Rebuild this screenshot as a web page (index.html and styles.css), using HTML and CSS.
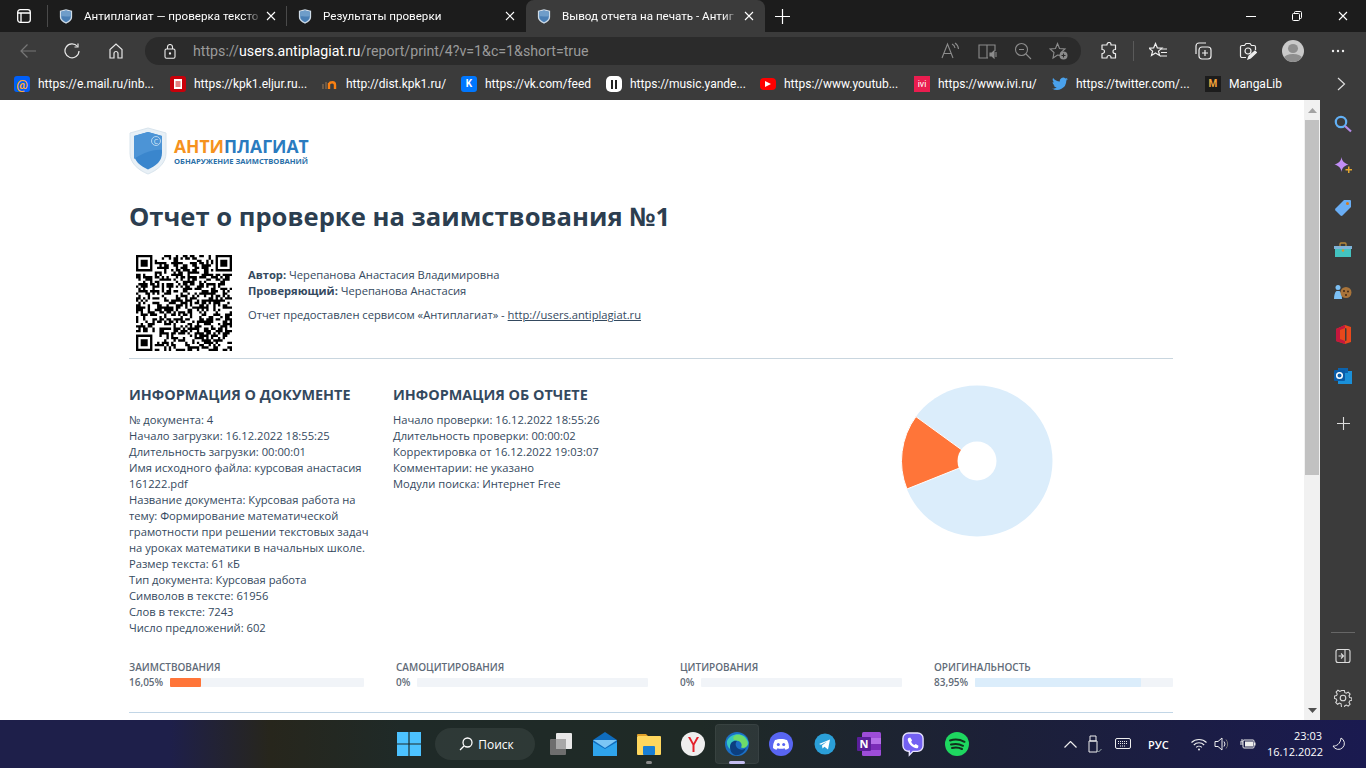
FILE: index.html
```html
<!DOCTYPE html>
<html lang="ru">
<head>
    <meta charset="UTF-8">
    <title>Вывод отчета на печать - Антиплагиат</title>
    <link rel="stylesheet" href="styles.css">
</head>
<body>

<svg class="defs" width="0" height="0">
    <symbol id="shield" viewBox="0 0 16 18">
        <path d="M1 2.500 8 .8l7 1.700v7.200c0 3.600-3.200 6-7 7.600-3.800-1.600-7-4-7-7.600z" fill="#cfdce8"/>
        <path d="M2.500 3.500 8 2.200l5.500 1.300v6.200c0 2.800-2.500 4.700-5.500 6-3-1.300-5.500-3.200-5.500-6z" fill="#4a7fb5"/>
        <path d="M8 2.200l5.500 1.300v5C10 10 6 8 2.500 9V3.500z" fill="#6f9dc9"/>
    </symbol>
    <symbol id="close" viewBox="0 0 10 10">
        <path d="M1 1l8 8M9 1 1 9" stroke="#fff" stroke-width="1.100" fill="none"/>
    </symbol>
</svg>

<div class="tabstrip">
    <div class="strip-icon">
        <svg width="16" height="16" viewBox="0 0 16 16" fill="none" stroke="#fff" stroke-width="1.300"><rect x="1.700" y="1.700" width="12.600" height="12.600" rx="2.500"/><path d="M1.700 5h12.600M5 5v9" /></svg>
    </div>
    <div class="tab">
        <svg class="tab-fav"><use href="#shield"/></svg>
        <span class="tab-title">Антиплагиат — проверка тексто</span>
        <svg class="tab-close"><use href="#close"/></svg>
    </div>
    <div class="tab">
        <svg class="tab-fav"><use href="#shield"/></svg>
        <span class="tab-title">Результаты проверки</span>
        <svg class="tab-close"><use href="#close"/></svg>
    </div>
    <div class="tab active">
        <svg class="tab-fav"><use href="#shield"/></svg>
        <span class="tab-title">Вывод отчета на печать - Антиг</span>
        <svg class="tab-close"><use href="#close"/></svg>
    </div>
    <div class="new-tab">
        <svg width="15" height="15" viewBox="0 0 15 15"><path d="M7.500 0v15M0 7.500h15" stroke="#fff" stroke-width="1.200"/></svg>
    </div>
    <div class="win-controls">
        <div class="win-btn"><svg width="10" height="10" viewBox="0 0 10 10"><path d="M0 5.500h10" stroke="#fff"/></svg></div>
        <div class="win-btn"><svg width="10" height="10" viewBox="0 0 10 10" fill="none" stroke="#fff"><rect x=".5" y="2.500" width="7" height="7" rx="1"/><path d="M2.500 2.500V1.500a1 1 0 0 1 1-1h5a1 1 0 0 1 1 1v5a1 1 0 0 1-1 1h-1"/></svg></div>
        <div class="win-btn"><svg width="10" height="10"><use href="#close"/></svg></div>
    </div>
</div>

<div class="toolbar">
    <div class="tool-btn"><svg width="16" height="16" viewBox="0 0 16 16" fill="none" stroke="#777" stroke-width="1.200"><path d="M16 8H1M7.500 1.500 1 8l6.500 6.500"/></svg></div>
    <div class="tool-btn"><svg width="16" height="16" viewBox="0 0 16 16" fill="none" stroke="#e8e8e8" stroke-width="1.200"><path d="M13.500 3.500A7 7 0 1 0 15 8"/><path d="M14 .5v3.500h-3.500"/></svg></div>
    <div class="tool-btn"><svg width="16" height="16" viewBox="0 0 16 16" fill="none" stroke="#e8e8e8" stroke-width="1.200"><path d="M2 15V6.500L8 1l6 5.500V15h-4v-4.500a2 2 0 0 0-4 0V15z"/></svg></div>
    <div class="address">
        <svg class="lock" width="12" height="15" viewBox="0 0 12 15" fill="none" stroke="#eee" stroke-width="1.100"><rect x="1" y="5" width="10" height="9.300" rx="1.500"/><path d="M3.500 5V3a2.500 2.500 0 0 1 5 0v2"/><circle cx="6" cy="9.500" r=".6" fill="#eee"/></svg>
        <span class="url"><span class="url-dim">https://</span>users.antiplagiat.ru<span class="url-dim">/report/print/4?v=1&amp;c=1&amp;short=true</span></span>
        <div class="addr-icons">
            <svg width="20" height="18" viewBox="0 0 20 18" fill="none" stroke="#8c8c8c" stroke-width="1.100"><path d="M1 16 6.500 2 12 16M3 11.500h7"/><path d="M11 2a5 5 0 0 1 3 4M14 1a8 8 0 0 1 3.500 6"/></svg>
            <svg width="20" height="18" viewBox="0 0 20 18" fill="none" stroke="#8c8c8c" stroke-width="1.100"><path d="M9 3H1v13h8zM9 3h8v6M9 16h1"/><path d="M12 11h2l2-2v7l-2-2h-2z" fill="#8c8c8c"/><path d="M18 10v5"/></svg>
            <svg width="18" height="18" viewBox="0 0 18 18" fill="none" stroke="#8c8c8c" stroke-width="1.100"><circle cx="7.500" cy="7.500" r="6"/><path d="M5 7.500h5M12 12l5 5"/></svg>
            <svg width="20" height="18" viewBox="0 0 20 18" fill="none" stroke="#8c8c8c" stroke-width="1.100"><path d="M8.500 1.500 10.500 6.500 16 7l-4 3.500 1 3-4.500-.5L4 16l1-5.500L1 7l5.500-.5z"/><circle cx="14.500" cy="13.500" r="4" fill="#8c8c8c" stroke="none"/><path d="M12.500 13.500h4M14.500 11.500v4" stroke="#2b2b2b"/></svg>
        </div>
    </div>
    <div class="tool-btn first"><svg width="18" height="18" viewBox="0 0 18 18" fill="none" stroke="#eee" stroke-width="1.200"><path d="M7 3V2.500a2 2 0 0 1 4 0V3h4.500v4.500H15a2 2 0 0 0 0 4h.5V16H11v-.5a2 2 0 0 0-4 0v.5H2v-4.500h.5a2 2 0 0 0 0-4H2V3z" stroke-linejoin="round"/></svg></div>
    <div class="tool-sep"></div>
    <div class="tool-btn wide"><svg width="18" height="18" viewBox="0 0 18 18" fill="none" stroke="#eee" stroke-width="1.200"><path d="M6.500 1.500 8.300 5.800l4.700.3-3.500 3 1.100 4.400-4.100-2.500-4 2.500L3.600 9.100 0 6.100l4.700-.3z"/><path d="M12 7h6M12 10.500h6M11 14h7"/></svg></div>
    <div class="tool-btn wide"><svg width="18" height="18" viewBox="0 0 18 18" fill="none" stroke="#eee" stroke-width="1.200"><path d="M2 12V4a3 3 0 0 1 3-3h7"/><rect x="5" y="5" width="12" height="12" rx="3"/><path d="M11 8v6M8 11h6"/></svg></div>
    <div class="tool-btn wide"><svg width="18" height="18" viewBox="0 0 18 18" fill="none" stroke="#eee" stroke-width="1.200"><path d="M7 15.500H3a1.500 1.500 0 0 1-1.500-1.500V5A1.500 1.500 0 0 1 3 3.500h2.500L7 1.500h4l1.500 2H15A1.500 1.500 0 0 1 16.500 5v3"/><circle cx="9" cy="9" r="3"/><path d="M9 17l1-3 6-5 1.500 1.500-6 5.500z" fill="#eee"/></svg></div>
    <div class="tool-btn wide"><span class="avatar"><span class="avatar-head"></span><span class="avatar-body"></span></span></div>
    <div class="tool-btn wide"><svg width="14" height="4" viewBox="0 0 14 4" fill="#eee"><circle cx="2" cy="2" r="1.200"/><circle cx="7" cy="2" r="1.200"/><circle cx="12" cy="2" r="1.200"/></svg></div>
</div>

<div class="bookmarks">
    <div class="bookmark"><span class="fav fav-mail">@</span><span>https://e.mail.ru/inb...</span></div>
    <div class="bookmark"><span class="fav fav-kpk"><svg width="8" height="10" viewBox="0 0 8 10"><path d="M0 0h8v10H0z" fill="#fff"/><path d="M1.500 3h5M1.500 5h5M1.500 7h5" stroke="#c00" /></svg></span><span>https://kpk1.eljur.ru...</span></div>
    <div class="bookmark"><span class="fav fav-dist"><svg width="16" height="12" viewBox="0 0 16 12" fill="none"><path d="M1 11V6M4 11V4" stroke="#6b5a48" stroke-width="2"/><path d="M7 11V5M7 6c1-2 6-3 6 1v4" stroke="#f98012" stroke-width="2.400"/></svg></span><span>http://dist.kpk1.ru/</span></div>
    <div class="bookmark"><span class="fav fav-vk">K</span><span>https://vk.com/feed</span></div>
    <div class="bookmark"><span class="fav fav-music"><svg width="8" height="9" viewBox="0 0 8 9"><path d="M1 0h2v9H1zM5 0h2v9H5z" fill="#222"/></svg></span><span>https://music.yande...</span></div>
    <div class="bookmark"><span class="fav fav-yt"><svg width="6" height="6" viewBox="0 0 6 6"><path d="M0 0l6 3-6 3z" fill="#fff"/></svg></span><span>https://www.youtub...</span></div>
    <div class="bookmark"><span class="fav fav-ivi">ivi</span><span>https://www.ivi.ru/</span></div>
    <div class="bookmark"><span class="fav"><svg width="16" height="14" viewBox="0 0 16 14"><path d="M16 2c-.6.300-1.200.4-1.900.5.700-.4 1.200-1 1.400-1.800-.6.400-1.300.6-2 .8A3.300 3.300 0 0 0 7.900 4.500C5.200 4.400 2.800 3.100 1.100.9.200 2.400.700 4.300 2.100 5.300c-.5 0-1-.2-1.500-.4 0 1.600 1.100 3 2.600 3.300-.5.100-1 .2-1.500.1.400 1.300 1.600 2.200 3.100 2.300A6.600 6.600 0 0 1 0 11.500 9.300 9.300 0 0 0 14.300 3.600c.7-.4 1.300-1 1.700-1.600z" fill="#4aa1eb"/></svg></span><span>https://twitter.com/...</span></div>
    <div class="bookmark"><span class="fav fav-manga">M</span><span>MangaLib</span></div>
    <div class="more-marks"><svg width="9" height="14" viewBox="0 0 9 14" fill="none" stroke="#ddd" stroke-width="1.200"><path d="M1 1l6.500 6L1 13"/></svg></div>
</div>

<div class="workspace">
    <main class="page">
        <div class="logo">
            <svg class="logo-shield" width="38" height="48" viewBox="0 0 38 48">
                <path d="M1 6 19 1l18 5v20c0 10-8 17-18 21C9 43 1 36 1 26z" fill="#e8f0f6" stroke="#d8e4ed"/>
                <path d="M5 9 19 5l14 4v17c0 8-6 13-14 16.500C11 39 5 34 5 26z" fill="#3a86cd"/>
                <path d="M19 5l14 4v14c-6-1-18 2-28 9V9z" fill="#4c94d6"/>
                <circle cx="27" cy="14" r="4.500" fill="none" stroke="#cfe4f5" stroke-width=".8"/>
                <text x="27" y="16.500" text-anchor="middle" class="logo-c">C</text>
            </svg>
            <div class="logo-text">
                <div class="logo-name"><span class="logo-orange">АНТИ</span><span class="logo-blue">ПЛАГИАТ</span></div>
                <div class="logo-sub">ОБНАРУЖЕНИЕ ЗАИМСТВОВАНИЙ</div>
            </div>
        </div>

        <h1>Отчет о проверке на заимствования №1</h1>

        <div class="summary">
            <svg id="qr" class="qr" viewBox="0 0 41 41"></svg>
            <div class="summary-text">
                <p><strong>Автор:</strong> Черепанова Анастасия Владимировна</p>
                <p><strong>Проверяющий:</strong> Черепанова Анастасия</p>
                <p class="service">Отчет предоставлен сервисом «Антиплагиат» - <a href="#">http://users.antiplagiat.ru</a></p>
            </div>
        </div>

        <div class="info">
            <section class="info-doc">
                <h2>ИНФОРМАЦИЯ О ДОКУМЕНТЕ</h2>
                <p>№ документа: 4</p>
                <p>Начало загрузки: 16.12.2022 18:55:25</p>
                <p>Длительность загрузки: 00:00:01</p>
                <p>Имя исходного файла: курсовая анастасия 161222.pdf</p>
                <p>Название документа: Курсовая работа на тему: Формирование математической грамотности при решении текстовых задач на уроках математики в начальных школе.</p>
                <p>Размер текста: 61 кБ</p>
                <p>Тип документа: Курсовая работа</p>
                <p>Символов в тексте: 61956</p>
                <p>Слов в тексте: 7243</p>
                <p>Число предложений: 602</p>
            </section>
            <section class="info-report">
                <h2>ИНФОРМАЦИЯ ОБ ОТЧЕТЕ</h2>
                <p>Начало проверки: 16.12.2022 18:55:26</p>
                <p>Длительность проверки: 00:00:02</p>
                <p>Корректировка от 16.12.2022 19:03:07</p>
                <p>Комментарии: не указано</p>
                <p>Модули поиска: Интернет Free</p>
            </section>
            <div class="chart">
                <svg width="160" height="160" viewBox="0 0 160 160">
                    <circle cx="80" cy="80" r="75.500" fill="#dbedfb"/>
                    <path d="M80 80 18.920 35.620A75.500 75.500 0 0 0 9.900 108.040z" fill="#ff7539" stroke="#fff" stroke-width="1"/>
                    <circle cx="80" cy="80" r="19.500" fill="#fff"/>
                </svg>
            </div>
        </div>

        <div class="stats">
            <div class="stat">
                <div class="stat-label">ЗАИМСТВОВАНИЯ</div>
                <div class="stat-row"><span class="stat-value">16,05%</span><div class="track"><div class="fill fill-orange" style="width: 16.05%"></div></div></div>
            </div>
            <div class="stat">
                <div class="stat-label">САМОЦИТИРОВАНИЯ</div>
                <div class="stat-row"><span class="stat-value">0%</span><div class="track"></div></div>
            </div>
            <div class="stat">
                <div class="stat-label">ЦИТИРОВАНИЯ</div>
                <div class="stat-row"><span class="stat-value">0%</span><div class="track"></div></div>
            </div>
            <div class="stat">
                <div class="stat-label">ОРИГИНАЛЬНОСТЬ</div>
                <div class="stat-row"><span class="stat-value">83,95%</span><div class="track"><div class="fill fill-blue" style="width: 83.95%"></div></div></div>
            </div>
        </div>
        <hr class="rule">
    </main>

    <div class="scrollbar">
        <div class="scroll-arrow"><svg width="9" height="5" viewBox="0 0 9 5"><path d="M4.500 0 9 5H0z" fill="#a3a3a3"/></svg></div>
        <div class="scroll-thumb"></div>
        <div class="scroll-rest"></div>
        <div class="scroll-arrow"><svg width="9" height="5" viewBox="0 0 9 5"><path d="M0 0h9L4.500 5z" fill="#505050"/></svg></div>
    </div>

    <aside class="sidebar">
        <div class="side-icon"><svg width="18" height="18" viewBox="0 0 18 18" fill="none" stroke-width="2.200"><circle cx="7" cy="7" r="5.200" stroke="#62b0f5"/><path d="M11 11l6 5.500" stroke="#b58ae8"/></svg></div>
        <div class="side-icon"><svg width="18" height="18" viewBox="0 0 18 18"><path d="M7.500 0c.6 4 2.400 6 7 7.500-4.600 1.500-6.400 3.500-7 7.500-.6-4-2.400-6-7-7.500 4.600-1.500 6.400-3.500 7-7.500z" fill="#c08df5"/><path d="M14 9.500h1.500v2.500H18v1.500h-2.500V16H14v-2.500h-2.500V12H14z" fill="#e2a52f"/></svg></div>
        <div class="side-icon"><svg width="18" height="18" viewBox="0 0 18 18"><path d="M10 1h6a1 1 0 0 1 1 1v6L8.500 16.500a1.500 1.500 0 0 1-2 0L1.500 11.500a1.500 1.500 0 0 1 0-2z" fill="#6aaef5"/><circle cx="13.500" cy="4.500" r="1.500" fill="#d87a1a"/></svg></div>
        <div class="side-icon"><svg width="18" height="16" viewBox="0 0 18 16"><path d="M6 4V2a1 1 0 0 1 1-1h4a1 1 0 0 1 1 1v2" fill="none" stroke="#b8893a" stroke-width="1.300"/><rect y="4" width="18" height="3" fill="#7fb3d8"/><rect x="1" y="7" width="16" height="8" fill="#43c3c0"/><circle cx="9" cy="8.500" r="1.200" fill="#d9962d"/></svg></div>
        <div class="side-icon"><svg width="20" height="16" viewBox="0 0 20 16"><circle cx="5" cy="3.500" r="2.500" fill="#7cc0f5"/><path d="M1 15c0-4 1-7 2.500-8h3C8 8 9 11 9 15z" fill="#7cc0f5"/><circle cx="13" cy="8.500" r="5.500" fill="#a9743a"/><circle cx="11" cy="7" r="1" fill="#40291a"/><circle cx="15" cy="7.500" r="1" fill="#40291a"/><circle cx="13" cy="11" r="1" fill="#40291a"/></svg></div>
        <div class="side-icon"><svg width="16" height="19" viewBox="0 0 16 19"><path d="M10 0 16 2v15l-6 2-9-3V4z" fill="#e8481b"/><path d="M1 4 10 0v3L5 5v9l5 2v3L1 16z" fill="#c4173d"/><path d="M10 3v13l1.500-.5v-12z" fill="#3b3b3b"/></svg></div>
        <div class="side-icon"><svg width="18" height="18" viewBox="0 0 18 18"><rect x="4" y="4" width="14" height="13" fill="#1a90d9"/><path d="M4 1h10v5H4z" fill="#0c63ad"/><rect y="3" width="11" height="11" rx="1" fill="#0a5ca8"/><circle cx="5.500" cy="8.500" r="2.800" fill="none" stroke="#fff" stroke-width="1.500"/></svg></div>
        <div class="side-icon side-add"><svg width="13" height="13" viewBox="0 0 13 13"><path d="M6.500 0v13M0 6.500h13" stroke="#ddd" stroke-width="1.100"/></svg></div>
        <div class="side-gap"></div>
        <div class="side-sep"></div>
        <div class="side-icon"><svg width="16" height="16" viewBox="0 0 16 16" fill="none" stroke="#ddd" stroke-width="1.100"><rect x="1" y="1.500" width="14" height="13" rx="2"/><path d="M10 1.500v13M3.500 8h5M6 5.500 8.500 8 6 10.500"/></svg></div>
        <div class="side-icon"><svg width="18" height="18" viewBox="0 0 18 18" fill="none" stroke="#ddd" stroke-width="1.100"><path d="M7.500 1h3l.5 2.300 1.600.7 2-1.200 2 2-1.200 2 .7 1.700 2.300.5v2.500l-2.300.6-.7 1.600 1.200 2-2 2-2-1.200-1.600.7-.5 2.300h-3L7 15.200l-1.700-.7-2 1.200-2-2 1.200-2-.7-1.600L-.1 9.500V7l2.300-.5.700-1.700-1.200-2 2-2 2 1.200L7 1.300z" transform="translate(.5 .5) scale(.94)"/><circle cx="9" cy="9" r="2.800"/></svg></div>
    </aside>
</div>

<footer class="taskbar">
    <div></div>
    <div class="task-center">
        <div class="task-icon"><svg width="24" height="24" viewBox="0 0 24 24"><path d="M0 0h11.400v11.400H0zM12.600 0H24v11.400H12.600zM0 12.600h11.400V24H0zM12.600 12.600H24V24H12.600z" fill="#4cc2ff"/></svg></div>
        <div class="task-search"><svg width="14" height="14" viewBox="0 0 14 14" fill="none" stroke="#fff" stroke-width="1.300"><circle cx="8.500" cy="5.500" r="4.500"/><path d="M5 9l-4 4"/></svg><span>Поиск</span></div>
        <div class="task-icon"><svg width="22" height="22" viewBox="0 0 22 22"><rect x="6" width="16" height="16" rx="1" fill="#e8e8e8"/><rect y="6" width="16" height="16" rx="1" fill="#6e6e6e"/><rect x="6" y="6" width="10" height="10" fill="#a8a8a8"/></svg></div>
        <div class="task-icon"><svg width="24" height="24" viewBox="0 0 24 24"><path d="M12 0 24 8v16H0V8z" fill="#0f6cbd"/><path d="M0 8h24L12 16z" fill="#7cc6f5"/><path d="M0 10l12 7 12-7v14H0z" fill="#2fa4ec"/></svg></div>
        <div class="task-icon task-running"><svg width="24" height="24" viewBox="0 0 24 24"><path d="M0 3a1 1 0 0 1 1-1h8l2 2h-11z" fill="#e0a02a"/><rect y="4" width="24" height="19" rx="1" fill="#ffd75e"/><rect x="6" y="14" width="12" height="9" rx="1" fill="#1a7fd4"/></svg><i class="dot"></i></div>
        <div class="task-icon"><svg width="24" height="24" viewBox="0 0 24 24"><circle cx="12" cy="12" r="12" fill="#eee"/><path d="M7 5l4.500 8v7h2v-7L18 5h-2.200L12.500 11 9.200 5z" fill="#e4202a"/></svg></div>
        <div class="task-icon task-active"><svg width="24" height="24" viewBox="0 0 24 24"><circle cx="12" cy="12" r="12" fill="#1b6fc4"/><path d="M2 9C5 1 19-1 23 9c1.500 4-2 7-5.500 6.500C19 12 16 8 12 8.500 7.500 9 6 15 11 19c-5 0-10-4-9-10z" fill="#38c7c0"/><path d="M22 9c2 5-2 8-6 6.500 2-3-.5-7-4.500-7C8 8.500 6.500 5 11 3c5-1 9 2 11 6z" fill="#6fdc68"/><path d="M5 15c0-5 4-7 7-6-2 2-2 6 2 8 3 1.500 6 0 7-1-2 5-7 8-11 7-3-1-5-4-5-8z" fill="#0c3f80"/></svg><i class="dash"></i></div>
        <div class="task-icon"><svg width="24" height="24" viewBox="0 0 24 24"><circle cx="12" cy="12" r="12" fill="#5865f2"/><path d="M6 8c3-1.500 9-1.500 12 0 1.500 2.500 2 5 2 8-1.500 1-2.500 1.500-3.500 1.700l-1-1.500c-2 .7-5 .7-7 0l-1 1.500C6.500 17.500 5.500 17 4 16c0-3 .5-5.500 2-8z" fill="#fff"/><circle cx="9.300" cy="12.500" r="1.500" fill="#5865f2"/><circle cx="14.700" cy="12.500" r="1.500" fill="#5865f2"/></svg></div>
        <div class="task-icon"><svg width="24" height="24" viewBox="0 0 24 24"><circle cx="12" cy="12" r="10.500" fill="#2b9fd8"/><path d="M6 12l11-4.500-2 10-3.500-2.700-2 1.800-.5-3L14 9.500l-6 3.300z" fill="#fff"/></svg></div>
        <div class="task-icon"><svg width="24" height="24" viewBox="0 0 24 24"><rect x="5" width="19" height="24" rx="1.500" fill="#9d4dd8"/><rect x="14" y="6" width="10" height="6" fill="#b56fe8"/><rect x="14" y="12" width="10" height="6" fill="#7b2cb8"/><rect y="5" width="14" height="14" rx="1" fill="#5a1f99"/><text x="7" y="16" text-anchor="middle" class="onenote-n">N</text></svg></div>
        <div class="task-icon"><svg width="22" height="26" viewBox="0 0 24 26"><path d="M7 1h10a6 6 0 0 1 6 6v8a6 6 0 0 1-6 6h-5l-4 4v-4.200A6 6 0 0 1 1 15V7a6 6 0 0 1 6-6z" fill="#7360f2" stroke="#e8e4ff" stroke-width="1.500"/><path d="M7 6.500l2-.5 2 3-1 1.500c.5 1.500 2 3 3.500 3.500l1.500-1 3 2-.5 2c-1 1-3 .5-5-.5-3-1.500-5-4-6-7-.5-1.500 0-2.500.5-3z" fill="#fff"/></svg></div>
        <div class="task-icon"><svg width="24" height="24" viewBox="0 0 24 24" fill="none"><circle cx="12" cy="12" r="12" fill="#1ed760"/><path d="M5 8.500c5-1.500 10-1 14.500 1.300M6 12.500c4-1 8.500-.7 12 1.300M7 16c3.500-.8 7-.5 10 1" stroke="#12301d" stroke-width="2" stroke-linecap="round"/></svg></div>
    </div>
    <div class="tray">
        <svg class="tray-chevron" width="13" height="7" viewBox="0 0 13 7" fill="none" stroke="#eee" stroke-width="1.200"><path d="M.5 6.500l6-6 6 6"/></svg>
        <svg class="tray-usb" width="14" height="18" viewBox="0 0 14 18" fill="none" stroke="#eee" stroke-width="1"><path d="M2 1h6v5H2zM1 6h8v11H1z"/><path d="M9 15.500l1.500 1.500 3-3" stroke="#9aa"/></svg>
        <svg class="tray-kbd" width="16" height="12" viewBox="0 0 16 12" fill="none" stroke="#eee" stroke-width="1"><rect x=".5" y=".5" width="15" height="10" rx="1.500"/><path d="M3 3.500h10M3 5.500h10M5 8h6" stroke-dasharray="1 1"/></svg>
        <span class="tray-lang">РУС</span>
        <svg class="tray-wifi" width="16" height="13" viewBox="0 0 16 13" fill="none" stroke="#eee" stroke-width="1.100"><path d="M.5 4.500c4-4 11-4 15 0M2.800 7c3-3 7.400-3 10.400 0M5.200 9.300c1.500-1.500 4.100-1.500 5.600 0"/><circle cx="8" cy="11.500" r="1" fill="#eee" stroke="none"/></svg>
        <svg class="tray-vol" width="16" height="14" viewBox="0 0 16 14" fill="none" stroke="#eee" stroke-width="1"><path d="M1 4.500h3L8 1v12L4 9.500H1zM10 4.500a4 4 0 0 1 0 5"/><path d="M12 2.500a7 7 0 0 1 0 9" stroke="#777"/></svg>
        <svg class="tray-bat" width="16" height="12" viewBox="0 0 16 12"><path d="M0 4h3M2 1v3M0 6h3" stroke="#eee" stroke-width="1"/><rect x="3" y="2" width="11" height="8" rx="1" fill="none" stroke="#eee"/><rect x="5" y="3.500" width="8" height="5" fill="#eee"/><rect x="14" y="4.500" width="1.500" height="3" fill="#eee"/></svg>
        <div class="tray-clock"><div>23:03</div><div>16.12.2022</div></div>
        <svg class="tray-moon" width="14" height="14" viewBox="0 0 14 14" fill="none" stroke="#eee" stroke-width="1"><path d="M9 1a6 6 0 1 1-8 8c3 .5 7.500-2 8-8z"/></svg>
    </div>
</footer>

<script src="qr.js"></script>
</body>
</html>
```

FILE: styles.css
```css
* {
    box-sizing: border-box;
}

html, body {
    margin: 0;
    height: 768px;
    overflow: hidden;
}

body {
    font-family: "Open Sans", "Noto Sans", sans-serif;
    background: #3b3b3b;
    display: flex;
    flex-direction: column;
}

.defs {
    position: absolute;
}

/* tab strip */
.tabstrip {
    height: 32px;
    background: #1c1c1c;
    display: flex;
    align-items: stretch;
    color: #fff;
    font-family: Roboto, sans-serif;
    font-size: 11.6px;
}

.strip-icon {
    width: 48px;
    display: flex;
    align-items: center;
    justify-content: center;
    border-right: 1px solid #4a4a4a;
    margin: 5px 0;
}

.tab {
    width: 239px;
    display: flex;
    align-items: center;
    padding: 0 11px 0 11px;
    position: relative;
}

.tab + .tab::before {
    content: "";
    position: absolute;
    left: -1px;
    top: 6px;
    bottom: 6px;
    width: 1px;
    background: #4a4a4a;
}

.tab.active {
    background: #3b3b3b;
    border-radius: 8px 8px 0 0;
}

.tab.active::before {
    display: none;
}

.tab-fav {
    width: 14px;
    height: 17px;
    flex: none;
    margin-right: 11px;
}

.tab-title {
    flex: 1;
    white-space: nowrap;
    -webkit-mask-image: linear-gradient(to right, #000 90%, transparent);
    mask-image: linear-gradient(to right, #000 90%, transparent);
}

.tab-close {
    width: 10px;
    height: 10px;
    flex: none;
    margin-left: 4px;
}

.new-tab {
    width: 34px;
    display: flex;
    align-items: center;
    justify-content: center;
}

.win-controls {
    margin-left: auto;
    display: flex;
}

.win-btn {
    width: 46px;
    display: flex;
    align-items: center;
    justify-content: center;
}

/* toolbar */
.toolbar {
    height: 36px;
    background: #3b3b3b;
    display: flex;
    align-items: center;
    padding: 2px 0 0 6px;
}

.tool-btn {
    width: 44px;
    height: 28px;
    flex: none;
    display: flex;
    align-items: center;
    justify-content: center;
}

.tool-btn.first {
    margin-left: 6px;
}

.tool-btn.wide {
    width: 45px;
}

.tool-sep {
    width: 1px;
    height: 20px;
    margin: 0 1px 0 2px;
    background: #5a5a5a;
}

.address {
    width: 936px;
    height: 28px;
    margin-left: 7px;
    background: #2b2b2b;
    border-radius: 14px;
    display: flex;
    align-items: center;
    padding-left: 19px;
}

.lock {
    flex: none;
    margin-right: 17px;
}

.url {
    font-family: Roboto, sans-serif;
    font-size: 14.2px;
    color: #fff;
    white-space: nowrap;
}

.url-dim {
    color: #9a9a9a;
}

.addr-icons {
    margin-left: auto;
    width: 140px;
    padding-right: 12px;
    display: flex;
    align-items: center;
    justify-content: space-between;
}

/* bookmarks */
.bookmarks {
    height: 32px;
    padding-left: 14px;
    display: grid;
    grid-template-columns: 156px 152px 139px 145px 154px 154px 138px 153px 120px 1fr;
    align-items: center;
    color: #fff;
    font-family: Roboto, sans-serif;
    font-size: 12px;
    background: #3b3b3b;
}

.bookmark {
    display: flex;
    align-items: center;
    gap: 8px;
    white-space: nowrap;
}

.fav {
    width: 16px;
    height: 16px;
    flex: none;
    display: flex;
    align-items: center;
    justify-content: center;
    border-radius: 3px;
    font-weight: 700;
    font-size: 11px;
    line-height: 1;
}

.fav-mail { background: #005ff9; color: #ffa930; font-size: 13px; }
.fav-kpk { background: #c8000a; }
.fav-vk { background: #0077ff; font-size: 10px; }
.fav-music { background: #fff; border-radius: 5px; }
.fav-yt { background: #f00; border-radius: 4px; height: 12px; }
.fav-ivi { background: #ea1d4f; border-radius: 0; font-size: 9px; font-weight: 400; }
.fav-manga { background: #1c1c1c; color: #f2a33a; font-size: 10px; border-radius: 0; }

.more-marks {
    justify-self: end;
    margin-right: 20px;
    display: flex;
}

/* page */
.workspace {
    height: 620px;
    display: flex;
}

.page {
    width: 1304px;
    background: #fff;
    padding: 27px 131px 0 129px;
    overflow: hidden;
    color: #34495e;
    font-size: 11.2px;
    line-height: 16px;
}

.logo {
    height: 48px;
    display: flex;
    align-items: center;
    gap: 7px;
}

.logo-shield {
    flex: none;
}

.logo-c {
    font-size: 7px;
    fill: #d8ebfa;
}

.logo-name {
    font-size: 17.5px;
    font-weight: 700;
    line-height: 20px;
}

.logo-orange { color: #f5921e; }
.logo-blue { color: #2a7bbf; }

.logo-sub {
    font-size: 7.6px;
    font-weight: 700;
    line-height: 11px;
    color: #2a6fa8;
    white-space: nowrap;
}

h1 {
    margin: 25px 0 21px;
    font-size: 25.6px;
    line-height: 34px;
    font-weight: 700;
    color: #2c3e50;
}

.summary {
    display: flex;
    align-items: flex-start;
    padding: 0 0 7px 7px;
    border-bottom: 1px solid #c9d6df;
}

.qr {
    width: 96px;
    height: 96px;
    flex: none;
    margin-right: 16px;
}

.summary-text {
    padding-top: 12px;
}

.summary-text p {
    margin: 0;
}

.summary-text .service {
    margin-top: 8px;
}

.summary-text a {
    color: #34495e;
}

.info {
    display: flex;
    margin-top: 26px;
}

.info h2 {
    margin: 0 0 7px;
    font-size: 14.4px;
    line-height: 20px;
    font-weight: 700;
    color: #34495e;
    white-space: nowrap;
}

.info p {
    margin: 0;
}

.info-doc {
    width: 240px;
    margin-right: 24px;
}

.info-report {
    width: 240px;
}

.chart {
    margin: -4px 0 0 264px;
}

.stats {
    display: grid;
    grid-template-columns: 235px 252px 222px 239px;
    gap: 32px;
    margin-top: 24px;
}

.stat-label {
    font-size: 10px;
    line-height: 14px;
    font-weight: 600;
    color: #5f6b78;
    white-space: nowrap;
}

.stat-row {
    display: flex;
    align-items: center;
    gap: 7px;
    font-size: 10px;
    font-weight: 600;
    color: #5f6b78;
}

.track {
    flex: 1;
    height: 9px;
    background: #f1f4f8;
    border-radius: 1px;
}

.fill {
    height: 100%;
    border-radius: 1px;
}

.fill-orange { background: #ff7539; }
.fill-blue { background: #dbedfb; }

.rule {
    margin: 22px 0 0;
    border: 0;
    border-top: 1px solid #c2d6e6;
}

/* scrollbar and sidebar */
.scrollbar {
    width: 16px;
    background: #f1f1f1;
    display: flex;
    flex-direction: column;
}

.scroll-arrow {
    height: 20px;
    flex: none;
    display: flex;
    align-items: center;
    justify-content: center;
}

.scroll-thumb {
    height: 355px;
    margin: 0 1px;
    background: #c1c1c1;
}

.scroll-rest {
    flex: 1;
}

.sidebar {
    width: 46px;
    background: #3b3b3b;
    display: flex;
    flex-direction: column;
    align-items: center;
    padding: 3px 0 1px;
}

.side-icon {
    height: 42px;
    width: 100%;
    flex: none;
    display: flex;
    align-items: center;
    justify-content: center;
}

.side-add {
    margin-top: 5px;
}

.side-gap {
    flex: 1;
}

.side-sep {
    width: 24px;
    height: 1px;
    background: #666;
    margin-bottom: 2px;
}

/* taskbar */
.taskbar {
    height: 48px;
    background: linear-gradient(to right, #1e1f4a 0, #1e1f4a 170px, #27261c 270px, #1f2a28 400px, #1f2a26 700px, #1c2038 1000px, #1a1a50 1366px);
    display: grid;
    grid-template-columns: 1fr auto 1fr;
    align-items: center;
    color: #fff;
}

.task-center {
    display: flex;
    align-items: center;
}

.task-icon {
    width: 44px;
    height: 40px;
    display: flex;
    align-items: center;
    justify-content: center;
    position: relative;
    border-radius: 4px;
}

.task-active {
    background: rgba(255, 255, 255, .07);
    box-shadow: inset 0 0 0 1px rgba(255, 255, 255, .05);
}

.dot, .dash {
    position: absolute;
    bottom: 0;
    left: 50%;
    height: 3px;
    border-radius: 2px;
    transform: translateX(-50%);
}

.dot {
    width: 6px;
    background: #8a8a8a;
}

.dash {
    width: 16px;
    background: #c3bdf0;
}

.task-search {
    width: 100px;
    height: 32px;
    margin: 0 4px;
    background: rgba(255, 255, 255, .07);
    border-radius: 16px;
    display: flex;
    align-items: center;
    justify-content: center;
    gap: 5px;
    font-size: 12px;
    padding-left: 3px;
}

.tray {
    display: flex;
    align-items: center;
    font-size: 11px;
    padding-left: 85px;
}

.tray-usb { margin-left: 11px; }
.tray-kbd { margin-left: 13px; }
.tray-lang { margin-left: 17px; font-weight: 600; width: 24px; }
.tray-wifi { margin-left: 19px; }
.tray-vol { margin-left: 7px; }
.tray-bat { margin-left: 10px; }

.tray-clock {
    margin-left: 11px;
    width: 55px;
    text-align: right;
    line-height: 16px;
    white-space: nowrap;
}

.tray-moon { margin-left: 10px; }

.onenote-n {
    font-size: 11px;
    font-weight: 700;
    fill: #fff;
}

.avatar {
    width: 22px;
    height: 22px;
    border-radius: 50%;
    background: #c9c9c9;
    overflow: hidden;
    display: flex;
    flex-direction: column;
    align-items: center;
}

.avatar-head {
    width: 10px;
    height: 11px;
    margin-top: 4px;
    border-radius: 50%;
    background: #8e8e8e;
}

.avatar-body {
    width: 18px;
    height: 10px;
    margin-top: 1px;
    border-radius: 50%;
    background: #8e8e8e;
}
```

FILE: qr.js
```js
// draws the report QR code: finder squares plus seeded data modules
var size = 41;
var seed = 1612;

function next() {
    seed = (seed * 16807) % 2147483647;
    return seed / 2147483647;
}

function inFinder(x, y) {
    var near = function (v) { return v < 8; };
    var far = function (v) { return v >= size - 8; };
    return (near(x) && near(y)) || (far(x) && near(y)) || (near(x) && far(y));
}

var d = "";

function square(x, y, s) {
    d += "M" + x + " " + y + "h" + s + "v" + s + "h-" + s + "z";
}

function ring(x, y) {
    d += "M" + x + " " + y + "h7v7h-7zM" + (x + 1) + " " + (y + 1) + "v5h5v-5z";
    square(x + 2, y + 2, 3);
}

for (var y = 0; y < size; y++) {
    for (var x = 0; x < size; x++) {
        if (!inFinder(x, y) && next() > 0.5) {
            square(x, y, 1);
        }
    }
}

ring(0, 0);
ring(size - 7, 0);
ring(0, size - 7);

var path = document.createElementNS("http://www.w3.org/2000/svg", "path");
path.setAttribute("d", d);
path.setAttribute("fill-rule", "evenodd");
document.getElementById("qr").appendChild(path);
```
